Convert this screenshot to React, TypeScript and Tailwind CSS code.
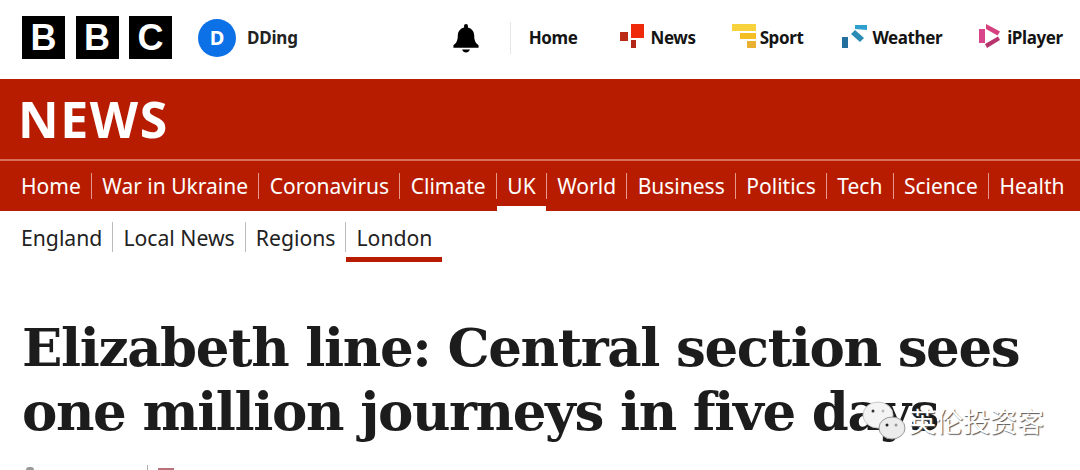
import { Fragment, type ReactNode } from "react";

const SANS = "font-['Noto_Sans','Liberation_Sans',sans-serif]";

const mainNav = ["Home", "War in Ukraine", "Coronavirus", "Climate", "UK", "World", "Business", "Politics", "Tech", "Science", "Health"];
const subNav = ["England", "Local News", "Regions", "London"];

function BbcBlock({ letter }: { letter: string }) {
  return (
    <div className="flex h-[43px] w-[43px] items-center justify-center bg-black text-[36px] font-bold leading-none text-white">
      {letter}
    </div>
  );
}

function BellIcon() {
  return (
    <svg width="28" height="29" viewBox="0 0 28 30" className="mt-[2px] block">
      <path d="M14 0c1.300 0 2 .9 2 2v1.600c4 1 6.500 4.200 6.500 8.400 0 5 1.200 7.700 4.500 10v2.500H1V22c3.300-2.300 4.500-5 4.500-10 0-4.200 2.500-7.400 6.500-8.400V2c0-1.100.7-2 2-2z" fill="#000" />
      <path d="M10 26.500h8c-.6 1.900-2.100 3-4 3s-3.400-1.100-4-3z" fill="#000" />
    </svg>
  );
}

function NewsIcon() {
  return (
    <svg width="24" height="24" viewBox="0 0 24 24" className="mb-[3px] block">
      <rect x="11" y="0" width="13" height="14" fill="#ee2a0b" />
      <rect x="0" y="8" width="8" height="9" fill="#bb2a14" />
      <rect x="11" y="16" width="5" height="8" fill="#b3261a" />
    </svg>
  );
}

function SportIcon() {
  return (
    <svg width="24" height="24" viewBox="0 0 24 24" className="mb-[3px] block">
      <rect x="0" y="0" width="24" height="7" fill="#f7d23c" />
      <rect x="8" y="9" width="16" height="6" fill="#f3bf24" />
      <rect x="15" y="17" width="9" height="7" fill="#eab130" />
    </svg>
  );
}

function WeatherIcon() {
  return (
    <svg width="25" height="24" viewBox="0 0 25 24" className="mb-[3px] block">
      <path d="M13 1l12 0v5l-12-1z" fill="#2e9fcf" />
      <path d="M9 10l4-4 9 8-4 4z" fill="#2a8bb5" />
      <rect x="0" y="13" width="6" height="11" fill="#23709f" />
    </svg>
  );
}

function IplayerIcon() {
  return (
    <svg width="21" height="24" viewBox="0 0 21 24" className="mb-[3px] block">
      <path d="M7 0l14 7.500-2.500 4L7 5z" fill="#d6407f" />
      <rect x="0" y="5" width="6" height="14" fill="#d9458a" />
      <path d="M19 12.500l2 3.500L8 24l-2-4z" fill="#b8346e" />
    </svg>
  );
}

function TopLink({ icon, label, className }: { icon?: ReactNode; label: string; className: string }) {
  return (
    <div className={`flex items-center ${className}`}>
      {icon}
      <span className="text-[17px] font-bold tracking-[-0.4px] text-[#141414]">{label}</span>
    </div>
  );
}

function WechatMark() {
  return (
    <svg width="46" height="44" viewBox="0 0 46 44" className="block">
      <ellipse cx="16" cy="15" rx="15" ry="13" fill="#f4f4f4" stroke="#c8c8c8" />
      <circle cx="11" cy="11" r="1.500" fill="#333" />
      <circle cx="21" cy="11" r="1.500" fill="#bbb" />
      <ellipse cx="30" cy="28" rx="13" ry="11" fill="#ececec" stroke="#999" />
      <circle cx="25" cy="25" r="1.500" fill="#222" />
      <circle cx="34" cy="25" r="1.500" fill="#999" />
    </svg>
  );
}

export default function App() {
  return (
    <div className={`relative h-[470px] w-[1080px] overflow-hidden bg-white ${SANS}`}>
      <header className="flex h-[79px] items-center pb-[4px] pl-[22px]">
        <div className="flex gap-[10.500px] font-['Liberation_Sans',sans-serif]">
          <BbcBlock letter="B" />
          <BbcBlock letter="B" />
          <BbcBlock letter="C" />
        </div>
        <div className="ml-[26px] flex h-[38px] w-[38px] items-center justify-center rounded-full bg-[#0c70e6] text-[20px] font-bold text-white">
          D
        </div>
        <span className="ml-[11px] text-[17px] font-bold tracking-[-0.2px] text-[#222]">DDing</span>
        <div className="ml-[154px]">
          <BellIcon />
        </div>
        <div className="ml-[30px] h-[32px] w-px bg-[#e6e6e6]" />
        <TopLink label="Home" className="ml-[18px]" />
        <TopLink icon={<NewsIcon />} label="News" className="ml-[42px] gap-[7px]" />
        <TopLink icon={<SportIcon />} label="Sport" className="ml-[36px] gap-[4px]" />
        <TopLink icon={<WeatherIcon />} label="Weather" className="ml-[39px] gap-[5px]" />
        <TopLink icon={<IplayerIcon />} label="iPlayer" className="ml-[37px] gap-[7px]" />
      </header>

      <div className="h-[132px] bg-[#b81c00] text-white">
        <div className="flex h-[82px] items-center border-b-2 border-[#d9705c] pl-[18px]">
          <span className="text-[50px] font-bold leading-none tracking-[1.600px]">NEWS</span>
        </div>
        <nav className="flex h-[50px] items-stretch pl-[21px] text-[21px] leading-none">
          {mainNav.map((item, i) => (
            <Fragment key={item}>
              {i > 0 && <div className="mx-[10.300px] my-[12px] w-px bg-[#e39a8a]" />}
              <div className={`relative flex items-center ${item === "UK" ? "after:absolute after:-inset-x-[10px] after:bottom-0 after:h-[5px] after:bg-white" : ""}`}>
                {item}
              </div>
            </Fragment>
          ))}
        </nav>
      </div>

      <nav className="flex h-[54px] items-stretch pl-[21px] text-[21.200px] leading-none text-[#222]">
        {subNav.map((item, i) => (
          <Fragment key={item}>
            {i > 0 && <div className="mx-[10px] mt-[11px] mb-[13px] w-px bg-[#bbb]" />}
            <div className={`relative flex items-center pb-[1px] ${item === "London" ? "after:absolute after:-left-[10px] after:-right-[10px] after:bottom-[3px] after:h-[5px] after:bg-[#b81c00]" : ""}`}>
              {item}
            </div>
          </Fragment>
        ))}
      </nav>

      <h1 className="mt-[50px] pl-[22px] font-['DejaVu_Serif',serif] text-[53px] font-bold leading-[64px] tracking-[-1.4px] text-[#1c1c1c]">
        Elizabeth line: Central section sees
        <br />
        one million journeys in five days
      </h1>

      <div className="absolute left-[862px] top-[400px]">
        <WechatMark />
      </div>
      <span className="absolute left-[909px] top-[403px] font-['Noto_Sans_CJK_SC',sans-serif] text-[27px] leading-[36px] text-white [text-shadow:1px_1px_1px_#555]">
        英伦投资客
      </span>
      <div className="absolute left-[147px] top-[465px] h-[5px] w-px bg-[#aaa]" />
      <div className="absolute left-[158px] top-[468px] h-[2px] w-[16px] bg-[#b8737a]" />
      <div className="absolute left-[26px] top-[467px] h-[3px] w-[8px] rounded-t-full bg-[#999]" />
    </div>
  );
}
